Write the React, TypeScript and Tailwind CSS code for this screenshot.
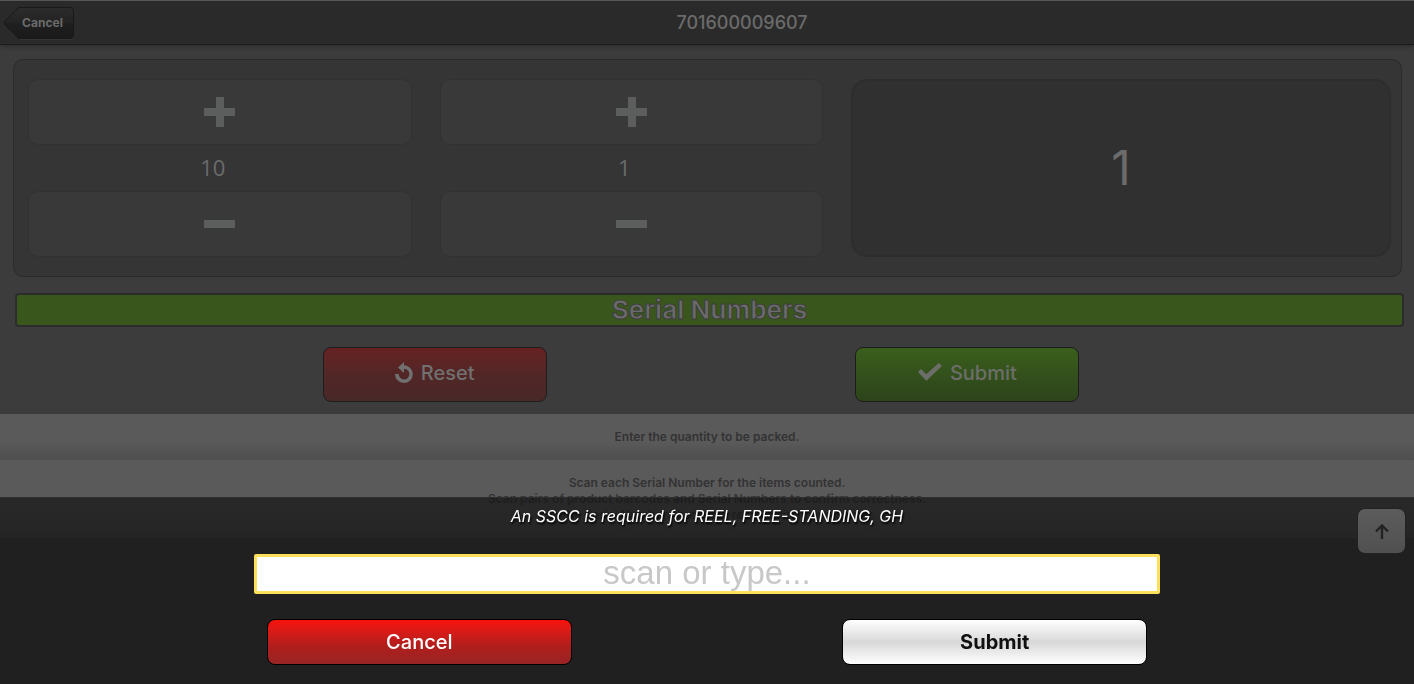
import React from "react";

function PlusIcon() {
  return (
    <svg width="31" height="30" viewBox="0 0 31 30" fill="currentColor" aria-hidden="true">
      <path d="M12 0h8v11h11v8H20v11h-8V19H0v-8h12z" />
    </svg>
  );
}

function MinusIcon() {
  return (
    <svg width="31" height="8" viewBox="0 0 31 8" fill="currentColor" aria-hidden="true">
      <path d="M0 0h31v8H0z" />
    </svg>
  );
}

function UndoIcon() {
  return (
    <svg width="18" height="22" viewBox="0 0 18 22" fill="currentColor" aria-hidden="true">
      <path d="M9 0v3.2A8.9 8.9 0 1 1 0 12h3.7A5.3 5.3 0 1 0 9 6.8V11L3 5.500z" />
    </svg>
  );
}

function CheckIcon() {
  return (
    <svg width="24" height="20" viewBox="0 0 24 20" fill="currentColor" aria-hidden="true">
      <path d="M0 9l3-3 5.200 5.200L20.800 0 24 3 8.400 17.800z" />
    </svg>
  );
}

function StepButton({ label, children }: { label: string; children: React.ReactNode }) {
  return (
    <button
      type="button"
      aria-label={label}
      className="flex h-[66px] w-full items-center justify-center rounded-[10px] border border-[#313131] bg-[#393939] text-[#5c5d5d]"
    >
      {children}
    </button>
  );
}

function Stepper({ amount }: { amount: number }) {
  return (
    <div className="flex flex-col">
      <StepButton label={`Add ${amount}`}>
        <PlusIcon />
      </StepButton>
      <div className="flex h-[46px] items-center justify-center pr-[14px] pb-0.5 font-['Open_Sans',sans-serif] text-[22px] text-[#6a6b6b]">
        {amount}
      </div>
      <StepButton label={`Subtract ${amount}`}>
        <MinusIcon />
      </StepButton>
    </div>
  );
}

export default function App() {
  return (
    <div className="relative min-h-screen overflow-hidden bg-[#3c3c3c] font-[Inter,sans-serif]">
      <header className="relative flex h-[45px] items-center border-t border-b border-t-[#565858] border-b-[#1b1b1b] bg-[#2a2a2a] pr-1 pl-1 shadow-[0_1px_5px_rgba(0,0,0,0.3)]">
        <button
          type="button"
          className="relative h-8 w-[70px] pl-[7px] text-[12px] leading-8 font-bold text-[#6c6c6c]"
        >
          <svg
            className="absolute inset-0"
            width="70"
            height="33"
            viewBox="0 0 70 33"
            aria-hidden="true"
          >
            <defs>
              <linearGradient id="back" x1="0" y1="0" x2="0" y2="1">
                <stop offset="0" stopColor="#2c2c2c" />
                <stop offset="0.5" stopColor="#232323" />
                <stop offset="0.52" stopColor="#1f1f1f" />
                <stop offset="1" stopColor="#1a1a1a" />
              </linearGradient>
            </defs>
            <path
              d="M15.500 32.500H66q3.500 0 3.500-4"
              fill="none"
              stroke="#353535"
            />
            <path
              d="M16 .5H66q3.500 0 3.500 3.500V28q0 3.500-3.500 3.500H16q-1.500 0-3-1.500L1.500 18.500q-2-2.500 0-5L13 2q1.500-1.500 3-1.500z"
              fill="url(#back)"
              stroke="#191919"
            />
          </svg>
          <span className="relative">Cancel</span>
        </button>
        <h1 className="flex-1 text-center text-[18px] leading-6 font-medium text-[#6b6b6b]">
          701600009607
        </h1>
      </header>

      <main>
        <section className="mt-[14px] mr-3 ml-[13px] grid grid-cols-[383fr_383fr_539fr] gap-x-7 rounded-[10px] border border-[#2b2b2b] bg-[#353535] pt-[19px] pr-[10px] pb-[19px] pl-[14px]">
          <Stepper amount={10} />
          <Stepper amount={1} />
          <output className="flex items-center justify-center rounded-2xl border-2 border-[#2d2d2d] bg-[#303030] text-[48px] text-[#6b6b6b]">
            1
          </output>
        </section>

        <h2 className="mt-4 mr-[10px] ml-[15px] rounded-[4px] border-2 border-[#2c2c2c] bg-[#39571c] text-center text-[26px] leading-[30px] font-bold text-[#6a6a6a] [-webkit-text-stroke:1px_#3d3d3d]">
          Serial Numbers
        </h2>

        <div className="pt-5 pr-3 pb-3">
          <div className="mx-auto grid w-[76%] grid-cols-2 justify-items-center">
            <button
              type="button"
              className="flex h-[55px] w-56 items-center justify-center gap-2 rounded-lg border border-[#1d1d1d] bg-linear-to-b from-[#672222] via-[#522626] to-[#482828] pb-1 text-[20px] font-medium text-[#707070]"
            >
              <UndoIcon />
              Reset
            </button>
            <button
              type="button"
              className="flex h-[55px] w-56 items-center justify-center gap-2 rounded-lg border border-[#1d1d1d] bg-linear-to-b from-[#3a5f1c] to-[#2d431b] pb-1 text-[20px] font-medium text-[#6c6f69]"
            >
              <CheckIcon />
              Submit
            </button>
          </div>
        </div>

        <div className="text-center text-[12px] leading-4 font-semibold text-[#333]">
          <p className="bg-linear-to-b from-[#5a5a5a] from-60% to-[#4e4e4e] py-[15px]">
            Enter the quantity to be packed.
          </p>
          <p className="bg-linear-to-b from-[#5a5a5a] from-60% to-[#4e4e4e] py-[15px]">
            Scan each Serial Number for the items counted.
            <br />
            Scan pairs of product barcodes and Serial Numbers to confirm correctness.
            <br />
            Tap the Serial Numbers button to recall all items you enter.
          </p>
        </div>
      </main>

      <form
        className="fixed inset-x-0 bottom-0 border-t border-[#333]/70 bg-[#161616]/73 pt-2 pb-[19px]"
        onSubmit={(e) => e.preventDefault()}
      >
        <label
          htmlFor="sscc"
          className="block text-center text-[16px] leading-5 text-white italic [text-shadow:1px_2px_2px_#000]"
        >
          An SSCC is required for REEL, FREE-STANDING, GH
        </label>
        <div className="mx-auto mt-7 w-[64.1%]">
          <input
            id="sscc"
            type="text"
            placeholder="scan or type..."
            className="block h-10 w-full rounded-[2px] border-[3px] border-[#ffe05a] bg-white pb-0.5 text-center font-['Liberation_Sans',sans-serif] text-[33px] leading-8 text-black outline-none placeholder:text-[#c8c8c8]"
          />
          <div className="mt-[25px] flex justify-between px-[13px]">
            <button
              type="button"
              className="h-[46px] w-[305px] rounded-lg border border-black bg-linear-to-b from-[#f8120c] via-[#b01e1c] via-60% to-[#982424] text-[20px] font-medium text-white"
            >
              Cancel
            </button>
            <button
              type="submit"
              className="h-[46px] w-[305px] rounded-lg border border-black bg-linear-to-b from-white via-[#d8d8d8] to-white text-[20px] font-bold text-[#111]"
            >
              Submit
            </button>
          </div>
        </div>
      </form>

      <button
        type="button"
        aria-label="Back to top"
        className="fixed right-2 bottom-[130px] flex h-[46px] w-[49px] items-center justify-center rounded-lg border border-[#222] bg-linear-to-b from-[#5c5c5c] to-[#505050] text-[#222]"
      >
        <svg width="14" height="15" viewBox="0 0 14 15" fill="none" stroke="currentColor" aria-hidden="true">
          <path d="M7 15V2M1 7.500l6-6 6 6" strokeWidth="2.400" />
        </svg>
      </button>
    </div>
  );
}
